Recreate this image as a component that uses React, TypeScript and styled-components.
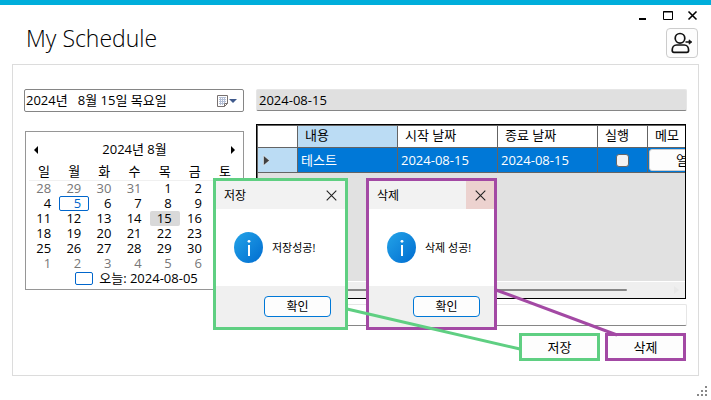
import React from "react";
import styled, { createGlobalStyle } from "styled-components";

const Global = createGlobalStyle`
  * { box-sizing: border-box; }
  body { margin: 0; background: #fff; }
  body, button, input, table {
    font-family: "Open Sans", "Noto Sans CJK KR", sans-serif;
    font-size: 13px;
    line-height: 15px;
    color: #000;
  }
  button { padding: 0; border: 0; background: none; }
`;

const GREEN = "#5fcf82";
const PURPLE = "#a349a4";

const Window = styled.div`
  position: relative;
  min-height: 100vh;
  border-top: 5px solid #00aedb;
  background: #fff;
  overflow: hidden;
  display: flex;
  flex-direction: column;
`;

const Header = styled.header`
  display: flex;
  justify-content: space-between;
  height: 59px;
  padding: 0 13px 0 26px;
`;

const Title = styled.h1`
  margin: 16px 0 0;
  font-size: 23px;
  line-height: 34px;
  font-weight: 300;
`;

const HeaderSide = styled.div`
  display: flex;
  flex-direction: column;
  align-items: flex-end;
`;

const WindowControls = styled.div`
  display: flex;
  height: 23px;
  gap: 5px;
`;

const ControlButton = styled.button`
  width: 20px;
  height: 20px;
  &:last-child { margin-right: -4px; }
  svg { display: block; }
`;

const UserButton = styled.button`
  width: 32px;
  height: 30px;
  border: 1px solid #ccc;
  border-radius: 4px;
  background: #fdfdfd;
  svg { display: block; }
`;

const Panel = styled.main`
  margin: 0 12px;
  padding: 24px 11px 14px;
  border: 1px solid #dcdcdc;
  display: grid;
  grid-template-columns: 220px minmax(0, 1fr);
  column-gap: 12px;
`;

const Column = styled.section`
  display: flex;
  flex-direction: column;
`;

const DatePicker = styled.div`
  display: flex;
  align-items: center;
  height: 23px;
  border: 1px solid #858585;
  border-radius: 2px;
  input {
    flex: 1;
    min-width: 0;
    padding: 0 1px;
    border: 0;
    outline: 0;
    background: none;
  }
  button { width: 28px; height: 20px; }
  svg { display: block; }
`;

const Calendar = styled.div`
  margin: 19px 0 0 1px;
  padding: 0 3px;
  border: 1px solid #969696;
`;

const CalendarBar = styled.div`
  display: flex;
  align-items: center;
  justify-content: space-between;
  height: 31px;
  padding: 4px 4px 0;
  button { width: 6px; height: 10px; }
  svg { display: block; }
`;

const Days = styled.table`
  width: 100%;
  table-layout: fixed;
  border-collapse: collapse;
  th {
    height: 17px;
    padding: 0;
    font-weight: 400;
    border-bottom: 1px solid #f0f0f0;
  }
  td { padding: 0; }
`;

const Day = styled.button<{ $muted?: boolean; $today?: boolean; $selected?: boolean }>`
  display: block;
  width: 100%;
  height: 15px;
  padding-right: ${(p) => (p.$today ? 7 : 8)}px;
  line-height: ${(p) => (p.$today ? 13 : 15)}px;
  text-align: right;
  border-radius: 2px;
  color: ${(p) => (p.$today ? "#0066cc" : p.$muted ? "#777" : "#000")};
  background: ${(p) => (p.$selected ? "#d9d9d9" : "transparent")};
  ${(p) => p.$today && "border: 1px solid #0066cc;"}
`;

const TodayLine = styled.button`
  display: flex;
  align-items: center;
  justify-content: center;
  gap: 6px;
  width: 100%;
  height: 18px;
  padding: 0 0 2px 4px;
`;

const TodayMark = styled.span`
  width: 18px;
  height: 13px;
  border: 1px solid #0066cc;
  border-radius: 2px;
`;

const TextBox = styled.input<{ $filled?: boolean }>`
  width: 100%;
  height: 22px;
  padding: 0 2px;
  border: 1px solid #e6e6e6;
  border-bottom-color: #868686;
  border-radius: 2px;
  outline: 0;
  background: ${(p) => (p.$filled ? "#e0e0e0" : "#fff")};
`;

const GridFrame = styled.div`
  height: 175px;
  margin: 13px 1px 5px 0;
  border: 1px solid #000;
  box-shadow: inset 1px 1px 0 #646464;
  padding: 1px 0 0 1px;
  overflow: hidden;
  display: flex;
  flex-direction: column;
`;

const GridBody = styled.div`
  flex: 1;
  overflow: hidden;
  background: #e1e1e1;
`;

const Grid = styled.table`
  width: 470px;
  table-layout: fixed;
  border-collapse: separate;
  border-spacing: 0;
  th, td {
    padding: 0;
    font-weight: 400;
    text-align: left;
    white-space: nowrap;
    border-right: 1px solid #646464;
    border-bottom: 1px solid #646464;
  }
  thead th { height: 22px; padding: 0 0 2px 7px; background: #fff; }
  tbody th { height: 25px; padding-left: 5px; background: #bbdcf4; }
  tbody td { height: 25px; padding-left: 3px; background: #0078d7; color: #fff; }
  svg { display: block; }
`;

const HeadCell = styled.th<{ $width: number; $active?: boolean }>`
  width: ${(p) => p.$width}px;
  && { ${(p) => p.$active && "background: #bbdcf4;"} }
`;

const CheckCell = styled.td`
  && { padding: 0; text-align: center; }
`;

const Check = styled.input`
  appearance: none;
  display: block;
  width: 13px;
  height: 13px;
  margin: 0 auto;
  border: 1px solid #666;
  border-radius: 3px;
  background: #f3f3f3;
`;

const MemoButton = styled.button`
  display: block;
  width: 78px;
  height: 22px;
  margin-left: -2px;
  border: 1px solid #ccc;
  border-radius: 3px;
  background: #fdfdfd;
`;

const ScrollTrack = styled.div`
  display: flex;
  align-items: center;
  justify-content: space-between;
  height: 17px;
  padding: 0 6px 0 18px;
  border-top: 1px solid #fff;
  background: #efefef;
  svg { display: block; }
`;

const ScrollThumb = styled.div`
  width: 87%;
  height: 2px;
  border-radius: 1px;
  background: #868686;
`;

const Actions = styled.div`
  display: flex;
  justify-content: flex-end;
  gap: 5px;
  margin: 7px 1px 0 0;
`;

const ActionButton = styled.button<{ $color: string }>`
  width: 81px;
  height: 28px;
  border: 3px solid ${(p) => p.$color};
  background: #fdfdfd;
`;

const Dialog = styled.section<{ $color: string; $right: number; $width: number }>`
  position: absolute;
  top: 173px;
  right: ${(p) => p.$right}px;
  width: ${(p) => p.$width}px;
  height: 152px;
  border: 3px solid ${(p) => p.$color};
  background: #fff;
  display: flex;
  flex-direction: column;
`;

const DialogBar = styled.header<{ $hot?: boolean }>`
  display: flex;
  justify-content: space-between;
  align-items: center;
  height: 28px;
  padding-left: 8px;
  background: #f2f2f2;
  font-size: 12px;
  button {
    width: 28px;
    height: 100%;
    background: ${(p) => (p.$hot ? "#ecd2cf" : "transparent")};
  }
  svg { display: block; margin: 0 auto; }
`;

const DialogBody = styled.div`
  flex: 1;
  display: flex;
  align-items: center;
  gap: 9px;
  padding-left: 18px;
  font-size: 11px;
  white-space: nowrap;
`;

const DialogFoot = styled.footer`
  display: flex;
  justify-content: flex-end;
  align-items: center;
  height: 41px;
  padding-right: 14px;
  background: #f0f0f0;
  button {
    width: 67px;
    height: 21px;
    border: 1px solid #0078d7;
    border-radius: 4px;
    background: #fdfdfd;
    font-size: 12px;
  }
`;

const Connectors = styled.svg`
  position: absolute;
  top: 272px;
  right: 0;
  pointer-events: none;
`;

const SizeGrip = styled.svg`
  position: absolute;
  right: 4px;
  bottom: 4px;
`;

const weekdays = ["일", "월", "화", "수", "목", "금", "토"];
const weeks = Array.from({ length: 6 }, (_, w) =>
  Array.from({ length: 7 }, (_, d) => {
    const n = w * 7 + d - 3;
    if (n < 1) return { n: n + 31, muted: true };
    if (n > 31) return { n: n - 31, muted: true };
    return { n, muted: false };
  })
);

function CloseIcon() {
  return (
    <svg width="11" height="11" viewBox="0 0 11 11" aria-hidden="true">
      <path d="M.7.7l9.6 9.6M10.3.7L.7 10.3" stroke="#222" strokeWidth="1.1" fill="none" />
    </svg>
  );
}

function InfoIcon({ id }: { id: string }) {
  return (
    <svg width="29" height="31" viewBox="0 0 29 31" aria-hidden="true">
      <defs>
        <linearGradient id={id} x1="0" y1="0" x2="1" y2="1">
          <stop offset="0" stopColor="#24a4e8" />
          <stop offset="1" stopColor="#006cd0" />
        </linearGradient>
      </defs>
      <ellipse cx="14.5" cy="15.5" rx="14.5" ry="15.5" fill={`url(#${id})`} />
      <circle cx="15" cy="9.3" r="1.4" fill="#fff" />
      <rect x="14" y="13" width="2" height="11" fill="#fff" />
    </svg>
  );
}

interface MessageProps {
  title: string;
  message: string;
  color: string;
  right: number;
  width: number;
  hot?: boolean;
  id: string;
}

function Message({ title, message, color, right, width, hot, id }: MessageProps) {
  return (
    <Dialog role="dialog" aria-label={title} $color={color} $right={right} $width={width}>
      <DialogBar $hot={hot}>
        <span>{title}</span>
        <button aria-label="닫기"><CloseIcon /></button>
      </DialogBar>
      <DialogBody>
        <InfoIcon id={id} />
        <span>{message}</span>
      </DialogBody>
      <DialogFoot><button>확인</button></DialogFoot>
    </Dialog>
  );
}

export default function App() {
  return (
    <Window>
      <Global />
      <Header>
        <Title>My Schedule</Title>
        <HeaderSide>
          <WindowControls>
            <ControlButton aria-label="최소화">
              <svg width="20" height="20"><path d="M7 14h7" stroke="#000" strokeWidth="2" /></svg>
            </ControlButton>
            <ControlButton aria-label="최대화">
              <svg width="20" height="20"><path d="M6.5 6.5h9v8h-9zM6 7h10" stroke="#000" fill="none" /></svg>
            </ControlButton>
            <ControlButton aria-label="닫기">
              <svg width="20" height="20"><path d="M6.5 6.5l8 8M14.5 6.5l-8 8" stroke="#000" strokeWidth="1.6" /></svg>
            </ControlButton>
          </WindowControls>
          <UserButton aria-label="로그아웃">
            <svg width="30" height="28" viewBox="0 0 30 28" fill="none" stroke="#111" strokeWidth="1.7" strokeLinejoin="round">
              <circle cx="13" cy="9.3" r="4.8" />
              <path d="M9.5 16h7.8c2.6 0 4.3 2.6 4.3 5.2 0 1.2-.7 2.2-1.8 2.2H7c-1.1 0-1.8-1-1.8-2.2 0-2.6 1.7-5.2 4.3-5.2z" />
              <path d="M18.5 13h4" strokeWidth="1.5" />
              <path d="M22 10.8l3 2.2-3 2.2z" fill="#111" strokeWidth="0.6" />
            </svg>
          </UserButton>
        </HeaderSide>
      </Header>

      <Panel>
        <Column>
          <DatePicker>
            <input aria-label="날짜" defaultValue="2024년   8월 15일 목요일" />
            <button aria-label="달력 열기">
              <svg width="28" height="20">
                <path d="M2.5 4.5h10v8l-3 3h-7z" fill="#fff" stroke="#77706f" />
                <path d="M12.5 12.5h-3v3" fill="none" stroke="#77706f" />
                <path d="M4 6.5h7M4 8.5h7M4 10.5h7M4 12.5h5M5.5 6v8M7.5 6v8M9.5 6v6" stroke="#b4bfd6" />
                <path d="M14 8h8l-4 4z" fill="#3f5a8c" />
              </svg>
            </button>
          </DatePicker>
          <Calendar>
            <CalendarBar>
              <button aria-label="이전 달"><svg width="6" height="10"><path d="M5 1v8L1 5z" /></svg></button>
              <span>2024년 8월</span>
              <button aria-label="다음 달"><svg width="6" height="10"><path d="M1 1v8l4-4z" /></svg></button>
            </CalendarBar>
            <Days>
              <thead>
                <tr>{weekdays.map((d) => <th key={d} scope="col">{d}</th>)}</tr>
              </thead>
              <tbody>
                {weeks.map((week, w) => (
                  <tr key={w}>
                    {week.map((day) => (
                      <td key={day.n}>
                        <Day
                          $muted={day.muted}
                          $today={!day.muted && day.n === 5}
                          $selected={!day.muted && day.n === 15}
                        >
                          {day.n}
                        </Day>
                      </td>
                    ))}
                  </tr>
                ))}
              </tbody>
            </Days>
            <TodayLine><TodayMark />오늘: 2024-08-05</TodayLine>
          </Calendar>
        </Column>

        <Column>
          <TextBox $filled readOnly aria-label="선택한 날짜" defaultValue="2024-08-15" />
          <GridFrame>
            <GridBody>
              <Grid>
                <thead>
                  <tr>
                    <HeadCell $width={40} />
                    <HeadCell scope="col" $width={100} $active>내용</HeadCell>
                    <HeadCell scope="col" $width={100}>시작 날짜</HeadCell>
                    <HeadCell scope="col" $width={100}>종료 날짜</HeadCell>
                    <HeadCell scope="col" $width={50}>실행</HeadCell>
                    <HeadCell scope="col" $width={80}>메모</HeadCell>
                  </tr>
                </thead>
                <tbody>
                  <tr>
                    <th scope="row" aria-label="현재 행">
                      <svg width="8" height="11"><path d="M.5.5v10l6-5z" fill="#404040" stroke="#fff" strokeWidth=".5" /></svg>
                    </th>
                    <td>테스트</td>
                    <td>2024-08-15</td>
                    <td>2024-08-15</td>
                    <CheckCell><Check type="checkbox" aria-label="실행" /></CheckCell>
                    <td><MemoButton>열기</MemoButton></td>
                  </tr>
                </tbody>
              </Grid>
            </GridBody>
            <ScrollTrack>
              <ScrollThumb />
              <svg width="6" height="8"><path d="M1 0v8l5-4z" fill="#e8e8e8" /></svg>
            </ScrollTrack>
          </GridFrame>
          <TextBox aria-label="메모" />
          <Actions>
            <ActionButton $color={GREEN}>저장</ActionButton>
            <ActionButton $color={PURPLE}>삭제</ActionButton>
          </Actions>
        </Column>
      </Panel>

      <Message id="saved" title="저장" message="저장성공!" color={GREEN} right={363} width={135} />
      <Message id="removed" title="삭제" message="삭제 성공!" color={PURPLE} right={214} width={131} hot />
      <Connectors width="371" height="84" aria-hidden="true">
        <path d="M7 32L180 72" stroke={GREEN} strokeWidth="3" />
        <path d="M156 13L277 58" stroke={PURPLE} strokeWidth="3" />
      </Connectors>
      <SizeGrip width="10" height="10" fill="#888" aria-hidden="true">
        <path d="M8 0h2v2h-2zM4 4h2v2h-2zM8 4h2v2h-2zM0 8h2v2h-2zM4 8h2v2h-2zM8 8h2v2h-2z" />
      </SizeGrip>
    </Window>
  );
}
